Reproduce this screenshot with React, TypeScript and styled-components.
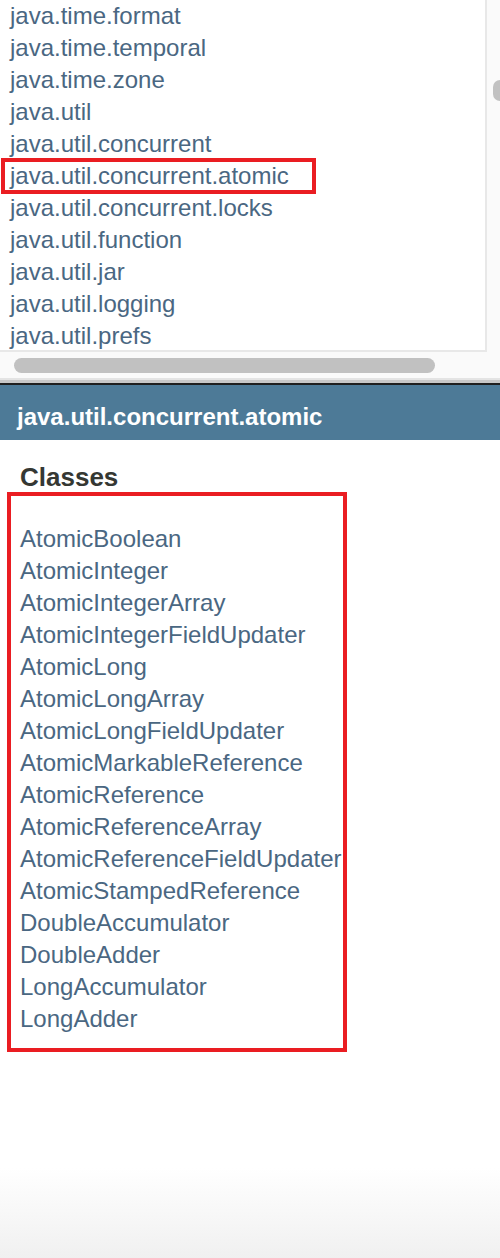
import React from "react";
import styled, { createGlobalStyle } from "styled-components";

const GlobalStyle = createGlobalStyle`
    html, body {
        margin: 0;
        padding: 0;
        background: #ffffff;
    }
    body {
        font-family: "Liberation Sans", Arial, Helvetica, sans-serif;
    }
`;

const packages: string[] = [
    "java.time.format",
    "java.time.temporal",
    "java.time.zone",
    "java.util",
    "java.util.concurrent",
    "java.util.concurrent.atomic",
    "java.util.concurrent.locks",
    "java.util.function",
    "java.util.jar",
    "java.util.logging",
    "java.util.prefs",
];

const classes: string[] = [
    "AtomicBoolean",
    "AtomicInteger",
    "AtomicIntegerArray",
    "AtomicIntegerFieldUpdater",
    "AtomicLong",
    "AtomicLongArray",
    "AtomicLongFieldUpdater",
    "AtomicMarkableReference",
    "AtomicReference",
    "AtomicReferenceArray",
    "AtomicReferenceFieldUpdater",
    "AtomicStampedReference",
    "DoubleAccumulator",
    "DoubleAdder",
    "LongAccumulator",
    "LongAdder",
];

const selectedPackage = "java.util.concurrent.atomic";

const Page = styled.div`
    width: 500px;
    height: 1258px;
    display: flex;
    flex-direction: column;
    overflow: hidden;
    background: #ffffff;
`;

const PackageFrame = styled.div`
    display: grid;
    grid-template-columns: 487px 13px;
    grid-template-rows: 352px 26px;
    background: #fafafa;
    flex-shrink: 0;
`;

const ListViewport = styled.div`
    background: #ffffff;
    border-right: 2px solid #e8e8e8;
    border-bottom: 2px solid #e8e8e8;
    overflow: hidden;
`;

const PackageList = styled.ul`
    list-style: none;
    margin: 0;
    padding: 0;
`;

interface RowProps {
    $highlighted?: boolean;
}

const PackageRow = styled.li<RowProps>`
    position: relative;
    height: 32px;
    padding-left: 10px;
    white-space: nowrap;

    ${(props) =>
        props.$highlighted &&
        `
        &::after {
            content: "";
            position: absolute;
            left: 1px;
            top: -2px;
            width: 315px;
            height: 36px;
            box-sizing: border-box;
            border: 4px solid #ea1d22;
            pointer-events: none;
        }
    `}
`;

const Link = styled.a`
    font-size: 24px;
    line-height: 32px;
    color: #4a6782;
    text-decoration: none;
`;

const VerticalTrack = styled.div`
    background: #fafafa;
    overflow: hidden;
`;

const VerticalThumb = styled.div`
    margin-top: 80px;
    margin-left: 6px;
    width: 14px;
    height: 21px;
    border-radius: 7px;
    background: #c1c1c1;
`;

const HorizontalTrack = styled.div`
    background: #fafafa;
    padding: 6px 0 0 14px;
`;

const HorizontalThumb = styled.div`
    width: 421px;
    height: 15px;
    border-radius: 8px;
    background: #c1c1c1;
`;

const Corner = styled.div`
    background: #fafafa;
`;

const FrameDivider = styled.div`
    height: 3px;
    background: #c8c8c8;
    border-top: 2px solid #e4e4e4;
    border-bottom: 2px solid #1f1f1f;
    flex-shrink: 0;
`;

const PackageHeader = styled.h1`
    margin: 0;
    padding: 18px 0 9px 17px;
    background: #4d7a97;
    color: #ffffff;
    font-size: 24px;
    font-weight: bold;
    line-height: 28px;
    flex-shrink: 0;
`;

const SectionTitle = styled.h2`
    margin: 22px 0 0 20px;
    font-size: 26px;
    line-height: 30px;
    font-weight: bold;
    color: #353833;
`;

const ClassBox = styled.ul<RowProps>`
    list-style: none;
    margin: 0 0 0 7px;
    padding: 27px 0 13px 9px;
    width: 340px;
    box-sizing: border-box;
    border: 4px solid ${(props) => (props.$highlighted ? "#ea1d22" : "transparent")};
    flex-shrink: 0;
`;

const ClassRow = styled.li`
    height: 32px;
    white-space: nowrap;
`;

const BottomFade = styled.div`
    flex: 1;
    background: linear-gradient(to bottom, #ffffff calc(100% - 90px), #f0f0f0 100%);
`;

export default function App() {
    return (
        <Page>
            <GlobalStyle />
            <PackageFrame>
                <ListViewport>
                    <PackageList>
                        {packages.map((name) => (
                            <PackageRow key={name} $highlighted={name === selectedPackage}>
                                <Link href="#">{name}</Link>
                            </PackageRow>
                        ))}
                    </PackageList>
                </ListViewport>
                <VerticalTrack>
                    <VerticalThumb />
                </VerticalTrack>
                <HorizontalTrack>
                    <HorizontalThumb />
                </HorizontalTrack>
                <Corner />
            </PackageFrame>
            <FrameDivider />
            <PackageHeader>{selectedPackage}</PackageHeader>
            <SectionTitle>Classes</SectionTitle>
            <ClassBox $highlighted>
                {classes.map((name) => (
                    <ClassRow key={name}>
                        <Link href="#">{name}</Link>
                    </ClassRow>
                ))}
            </ClassBox>
            <BottomFade />
        </Page>
    );
}
